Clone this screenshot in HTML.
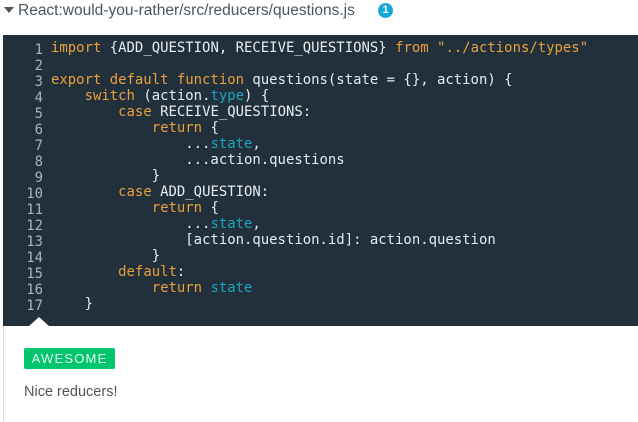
<!DOCTYPE html>
<html><head><meta charset="utf-8"><style>
body{margin:0;width:638px;height:422px;background:#fff;position:relative;overflow:hidden;font-family:"Liberation Sans",sans-serif}
.hdr{position:absolute;left:4px;top:2px;font-size:15.5px;color:#4a5660;white-space:nowrap}
.tri{display:inline-block;width:0;height:0;border-left:5px solid transparent;border-right:5px solid transparent;border-top:6px solid #4a5660;margin-right:4px;vertical-align:2px}
.badge{position:absolute;left:378px;top:3px;width:15px;height:15px;border-radius:50%;background:#16a9d8;color:#fff;font-size:11px;font-weight:bold;text-align:center;line-height:15px}
.code{position:absolute;left:3px;top:35px;width:635px;height:291px;background:#22303c}
pre{margin:0;position:absolute;top:5px;font-family:"DejaVu Sans Mono",monospace;font-size:13.95px;line-height:16px;color:#e6ebee}
.nums{left:0;width:40px;text-align:right;color:#a8b4bc;top:7px}
.src{left:48px}
.k{color:#e8a03c}.c{color:#1ea2c2}
.lb{position:absolute;left:3px;top:326px;width:1px;height:96px;background:#ddd}
.arrow{position:absolute;left:29px;top:317px;width:0;height:0;border-left:10px solid transparent;border-right:10px solid transparent;border-bottom:9px solid #fff}
.aw{position:absolute;left:24px;top:348px;width:91px;height:21px;background:#02c66e;border-radius:2px;color:#e8fff2;font-size:13px;letter-spacing:1.2px;text-align:center;line-height:21px}
.msg{position:absolute;left:24px;top:384px;font-size:14.5px;color:#555}
</style></head><body>
<div class="hdr"><span class="tri"></span>React:would-you-rather/src/reducers/questions.js</div>
<div class="badge">1</div>
<div class="code">
<pre class="nums">1
2
3
4
5
6
7
8
9
10
11
12
13
14
15
16
17</pre>
<pre class="src"><span class="k">import</span> {ADD_QUESTION, RECEIVE_QUESTIONS} <span class="k">from</span> <span class="k">"../actions/types"</span>

<span class="k">export default function</span> questions(state = {}, action) {
    <span class="k">switch</span> (action.<span class="c">type</span>) {
        <span class="k">case</span> RECEIVE_QUESTIONS:
            <span class="k">return</span> {
                ...<span class="c">state</span>,
                ...action.questions
            }
        <span class="k">case</span> ADD_QUESTION:
            <span class="k">return</span> {
                ...<span class="c">state</span>,
                [action.question.id]: action.question
            }
        <span class="k">default</span>:
            <span class="k">return</span> <span class="c">state</span>
    }</pre>
</div>
<div class="lb"></div>
<div class="arrow"></div>
<div class="aw">AWESOME</div>
<div class="msg">Nice reducers!</div>
</body></html>
